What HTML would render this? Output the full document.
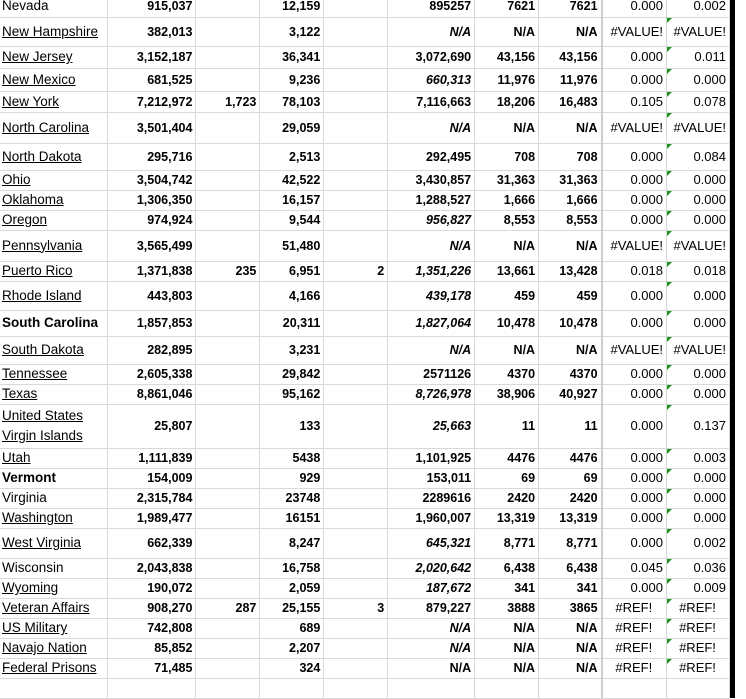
<!DOCTYPE html>
<html><head><meta charset="utf-8"><style>
html,body{margin:0;padding:0;background:#fff;width:746px;height:684px;overflow:hidden}
table{position:absolute;left:0;top:-5px;border-collapse:collapse;table-layout:fixed;font-family:"Liberation Sans",sans-serif;color:#000}
tr{box-sizing:border-box}
td{border-right:1px solid #d9d9d9;border-bottom:1px solid #d9d9d9;padding:0 3px 0 2px;white-space:nowrap;overflow:hidden;text-align:right;font-weight:bold;font-size:12.5px;vertical-align:middle;position:relative;line-height:14px}
td.n{text-align:left;font-weight:normal;font-size:13.5px;padding-left:2px}
td.n.u{text-decoration:underline}
td.n.b{font-weight:bold}
td.i{font-style:italic}
td.r{font-weight:normal;font-size:13px}
td.c{text-align:center}
td.I{border-left:2px solid #cfcfcf}
td.J::before{content:"";position:absolute;left:0;top:0;border-top:5px solid #1f8f1f;border-right:5px solid transparent}
td.K{background:#000;border:none;padding:0}
td.L{border:none}
td.v{line-height:20px}
</style></head><body>
<table>
<colgroup><col style="width:108px"><col style="width:88px"><col style="width:64px"><col style="width:64px"><col style="width:64px"><col style="width:87px"><col style="width:64px"><col style="width:63px"><col style="width:65px"><col style="width:63px"><col style="width:6px"><col style="width:10px"></colgroup>
<tr style="height:22px"><td class="n">Nevada</td><td>915,037</td><td></td><td>12,159</td><td></td><td>895257</td><td>7621</td><td>7621</td><td class="r I">0.000</td><td class="r J">0.002</td><td class="K"></td><td class="L"></td></tr>
<tr style="height:29px"><td class="n u">New Hampshire</td><td>382,013</td><td></td><td>3,122</td><td></td><td class="i">N/A</td><td>N/A</td><td>N/A</td><td class="r I">#VALUE!</td><td class="r J">#VALUE!</td><td class="K"></td><td class="L"></td></tr>
<tr style="height:22px"><td class="n u">New Jersey</td><td>3,152,187</td><td></td><td>36,341</td><td></td><td>3,072,690</td><td>43,156</td><td>43,156</td><td class="r I">0.000</td><td class="r J">0.011</td><td class="K"></td><td class="L"></td></tr>
<tr style="height:23px"><td class="n u">New Mexico</td><td>681,525</td><td></td><td>9,236</td><td></td><td class="i">660,313</td><td>11,976</td><td>11,976</td><td class="r I">0.000</td><td class="r J">0.000</td><td class="K"></td><td class="L"></td></tr>
<tr style="height:21px"><td class="n u">New York</td><td>7,212,972</td><td>1,723</td><td>78,103</td><td></td><td>7,116,663</td><td>18,206</td><td>16,483</td><td class="r I">0.105</td><td class="r J">0.078</td><td class="K"></td><td class="L"></td></tr>
<tr style="height:31px"><td class="n u">North Carolina</td><td>3,501,404</td><td></td><td>29,059</td><td></td><td class="i">N/A</td><td>N/A</td><td>N/A</td><td class="r I">#VALUE!</td><td class="r J">#VALUE!</td><td class="K"></td><td class="L"></td></tr>
<tr style="height:27px"><td class="n u">North Dakota</td><td>295,716</td><td></td><td>2,513</td><td></td><td>292,495</td><td>708</td><td>708</td><td class="r I">0.000</td><td class="r J">0.084</td><td class="K"></td><td class="L"></td></tr>
<tr style="height:20px"><td class="n u">Ohio</td><td>3,504,742</td><td></td><td>42,522</td><td></td><td>3,430,857</td><td>31,363</td><td>31,363</td><td class="r I">0.000</td><td class="r J">0.000</td><td class="K"></td><td class="L"></td></tr>
<tr style="height:20px"><td class="n u">Oklahoma</td><td>1,306,350</td><td></td><td>16,157</td><td></td><td>1,288,527</td><td>1,666</td><td>1,666</td><td class="r I">0.000</td><td class="r J">0.000</td><td class="K"></td><td class="L"></td></tr>
<tr style="height:20px"><td class="n u">Oregon</td><td>974,924</td><td></td><td>9,544</td><td></td><td class="i">956,827</td><td>8,553</td><td>8,553</td><td class="r I">0.000</td><td class="r J">0.000</td><td class="K"></td><td class="L"></td></tr>
<tr style="height:31px"><td class="n u">Pennsylvania</td><td>3,565,499</td><td></td><td>51,480</td><td></td><td class="i">N/A</td><td>N/A</td><td>N/A</td><td class="r I">#VALUE!</td><td class="r J">#VALUE!</td><td class="K"></td><td class="L"></td></tr>
<tr style="height:20px"><td class="n u">Puerto Rico</td><td>1,371,838</td><td>235</td><td>6,951</td><td>2</td><td class="i">1,351,226</td><td>13,661</td><td>13,428</td><td class="r I">0.018</td><td class="r J">0.018</td><td class="K"></td><td class="L"></td></tr>
<tr style="height:29px"><td class="n u">Rhode Island</td><td>443,803</td><td></td><td>4,166</td><td></td><td class="i">439,178</td><td>459</td><td>459</td><td class="r I">0.000</td><td class="r J">0.000</td><td class="K"></td><td class="L"></td></tr>
<tr style="height:26px"><td class="n b">South Carolina</td><td>1,857,853</td><td></td><td>20,311</td><td></td><td class="i">1,827,064</td><td>10,478</td><td>10,478</td><td class="r I">0.000</td><td class="r J">0.000</td><td class="K"></td><td class="L"></td></tr>
<tr style="height:28px"><td class="n u">South Dakota</td><td>282,895</td><td></td><td>3,231</td><td></td><td class="i">N/A</td><td>N/A</td><td>N/A</td><td class="r I">#VALUE!</td><td class="r J">#VALUE!</td><td class="K"></td><td class="L"></td></tr>
<tr style="height:20px"><td class="n u">Tennessee</td><td>2,605,338</td><td></td><td>29,842</td><td></td><td>2571126</td><td>4370</td><td>4370</td><td class="r I">0.000</td><td class="r J">0.000</td><td class="K"></td><td class="L"></td></tr>
<tr style="height:20px"><td class="n u">Texas</td><td>8,861,046</td><td></td><td>95,162</td><td></td><td class="i">8,726,978</td><td>38,906</td><td>40,927</td><td class="r I">0.000</td><td class="r J">0.000</td><td class="K"></td><td class="L"></td></tr>
<tr style="height:44px"><td class="n u v">United States<br>Virgin Islands</td><td>25,807</td><td></td><td>133</td><td></td><td class="i">25,663</td><td>11</td><td>11</td><td class="r I">0.000</td><td class="r J">0.137</td><td class="K"></td><td class="L"></td></tr>
<tr style="height:20px"><td class="n u">Utah</td><td>1,111,839</td><td></td><td>5438</td><td></td><td>1,101,925</td><td>4476</td><td>4476</td><td class="r I">0.000</td><td class="r J">0.003</td><td class="K"></td><td class="L"></td></tr>
<tr style="height:20px"><td class="n b">Vermont</td><td>154,009</td><td></td><td>929</td><td></td><td>153,011</td><td>69</td><td>69</td><td class="r I">0.000</td><td class="r J">0.000</td><td class="K"></td><td class="L"></td></tr>
<tr style="height:20px"><td class="n">Virginia</td><td>2,315,784</td><td></td><td>23748</td><td></td><td>2289616</td><td>2420</td><td>2420</td><td class="r I">0.000</td><td class="r J">0.000</td><td class="K"></td><td class="L"></td></tr>
<tr style="height:20px"><td class="n u">Washington</td><td>1,989,477</td><td></td><td>16151</td><td></td><td>1,960,007</td><td>13,319</td><td>13,319</td><td class="r I">0.000</td><td class="r J">0.000</td><td class="K"></td><td class="L"></td></tr>
<tr style="height:30px"><td class="n u">West Virginia</td><td>662,339</td><td></td><td>8,247</td><td></td><td class="i">645,321</td><td>8,771</td><td>8,771</td><td class="r I">0.000</td><td class="r J">0.002</td><td class="K"></td><td class="L"></td></tr>
<tr style="height:20px"><td class="n">Wisconsin</td><td>2,043,838</td><td></td><td>16,758</td><td></td><td class="i">2,020,642</td><td>6,438</td><td>6,438</td><td class="r I">0.045</td><td class="r J">0.036</td><td class="K"></td><td class="L"></td></tr>
<tr style="height:20px"><td class="n u">Wyoming</td><td>190,072</td><td></td><td>2,059</td><td></td><td class="i">187,672</td><td>341</td><td>341</td><td class="r I">0.000</td><td class="r J">0.009</td><td class="K"></td><td class="L"></td></tr>
<tr style="height:20px"><td class="n u">Veteran Affairs</td><td>908,270</td><td>287</td><td>25,155</td><td>3</td><td>879,227</td><td>3888</td><td>3865</td><td class="r I c">#REF!</td><td class="r J c">#REF!</td><td class="K"></td><td class="L"></td></tr>
<tr style="height:20px"><td class="n u">US Military</td><td>742,808</td><td></td><td>689</td><td></td><td class="i">N/A</td><td>N/A</td><td>N/A</td><td class="r I c">#REF!</td><td class="r J c">#REF!</td><td class="K"></td><td class="L"></td></tr>
<tr style="height:20px"><td class="n u">Navajo Nation</td><td>85,852</td><td></td><td>2,207</td><td></td><td class="i">N/A</td><td>N/A</td><td>N/A</td><td class="r I c">#REF!</td><td class="r J c">#REF!</td><td class="K"></td><td class="L"></td></tr>
<tr style="height:20px"><td class="n u">Federal Prisons</td><td>71,485</td><td></td><td>324</td><td></td><td>N/A</td><td>N/A</td><td>N/A</td><td class="r I c">#REF!</td><td class="r J c">#REF!</td><td class="K"></td><td class="L"></td></tr>
<tr style="height:20px"><td class="n"></td><td></td><td></td><td></td><td></td><td></td><td></td><td></td><td class="r I"></td><td class="r"></td><td class="K"></td><td class="L"></td></tr>
</table>
</body></html>
